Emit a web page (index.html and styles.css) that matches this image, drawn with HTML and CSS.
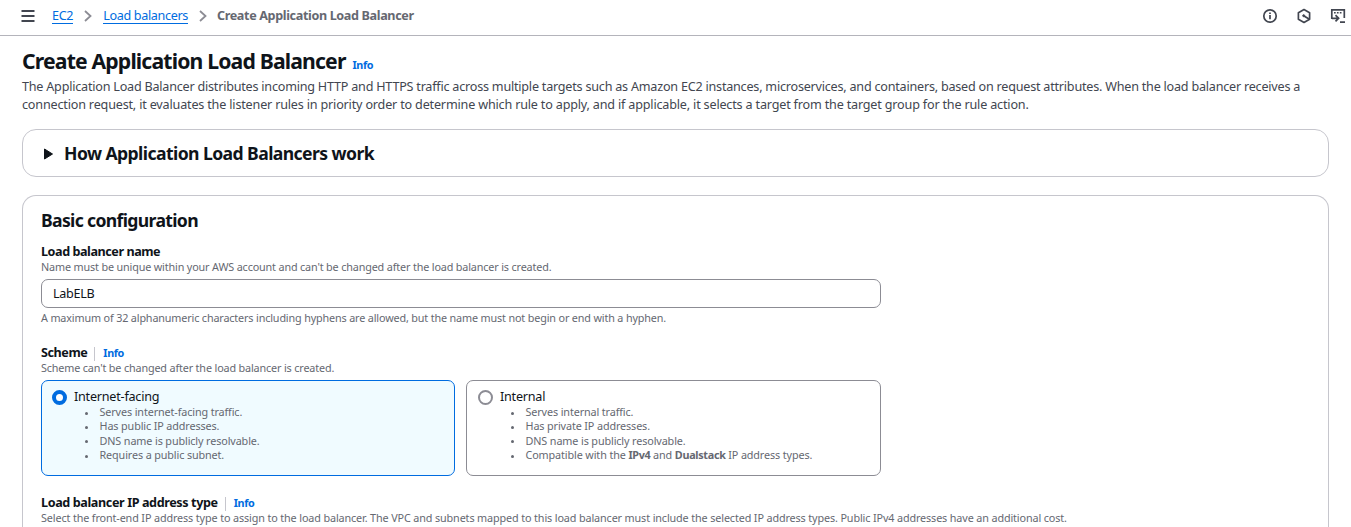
FILE: index.html
```html
<!DOCTYPE html>
<html lang="en">
<head>
<meta charset="utf-8">
<title>Create Application Load Balancer</title>
<link rel="stylesheet" href="styles.css">
</head>
<body>
<header class="topbar">
  <svg class="menu" width="14" height="12" viewBox="0 0 14 12"><path d="M.5 1h13M.5 6h13M.5 11h13" stroke="#424650" stroke-width="1.8"/></svg>
  <nav class="crumbs">
    <a class="crumb crumb-ec2" href="#">EC2</a>
    <svg class="chev" width="8" height="12" viewBox="0 0 8 12"><path d="M1 1l5.5 5L1 11" fill="none" stroke="#8c8c94" stroke-width="1.8"/></svg>
    <a class="crumb crumb-lb" href="#">Load balancers</a>
    <svg class="chev" width="8" height="12" viewBox="0 0 8 12"><path d="M1 1l5.5 5L1 11" fill="none" stroke="#8c8c94" stroke-width="1.8"/></svg>
    <span class="crumb-current">Create Application Load Balancer</span>
  </nav>
  <div class="tools">
    <svg width="16" height="16" viewBox="0 0 16 16" fill="none" stroke="#424650" stroke-width="1.7"><circle cx="8" cy="8" r="6.2"/><path d="M8 7v4.3M8 4.4v1.6"/></svg>
    <svg width="16" height="16" viewBox="0 0 16 16" fill="none" stroke="#424650" stroke-width="1.7"><path d="M8 1.6l5.6 3.1v6.6L8 14.4l-5.6-3.1V4.7z" stroke-linejoin="round"/><circle cx="7.7" cy="7.7" r="1" fill="#424650" stroke-width="1"/><path d="M8 8l5 3"/></svg>
    <svg width="16" height="16" viewBox="0 0 16 16" fill="none" stroke="#424650" stroke-width="1.7"><path d="M1.8 11V1.8h12.5V10M2 10.3h6.3M5.5 7.2l3.100 3.100-3.100 3.100M10 14.200h5"/><path d="M4 4.700h8" stroke-dasharray="1.700 1.200" stroke-width="1.500"/></svg>
  </div>
</header>
<main class="page">
  <div class="title-row"><h1>Create Application Load Balancer</h1><a class="info" href="#">Info</a></div>
  <p class="intro"><span class="intro-a">The Application Load Balancer distributes incoming HTTP and HTTPS traffic across multiple targets such as Amazon EC2 instances, microservices, and containers, based on request attributes. When the load balancer receives a</span><br><span class="intro-b">connection request, it evaluates the listener rules in priority order to determine which rule to apply, and if applicable, it selects a target from the target group for the rule action.</span></p>
  <section class="card how">
    <svg width="9" height="12" viewBox="0 0 9 12"><path d="M.5 1v10L8.5 6z" fill="#0f141a" stroke="#0f141a" stroke-linejoin="round"/></svg>
    <h2>How Application Load Balancers work</h2>
  </section>
  <section class="card config">
    <h2 class="config-title">Basic configuration</h2>
    <div class="field">
      <div class="label-row"><span class="label">Load balancer name</span></div>
      <div class="hint">Name must be unique within your AWS account and can't be changed after the load balancer is created.</div>
      <div class="input">LabELB</div>
      <div class="hint after">A maximum of 32 alphanumeric characters including hyphens are allowed, but the name must not begin or end with a hyphen.</div>
    </div>
    <div class="field scheme">
      <div class="label-row"><span class="label">Scheme</span><i class="sep"></i><a class="info" href="#">Info</a></div>
      <div class="hint">Scheme can't be changed after the load balancer is created.</div>
      <div class="tiles">
        <div class="tile selected">
          <span class="radio on"></span>
          <div><div class="tile-title">Internet-facing</div>
          <ul><li>Serves internet-facing traffic.</li><li>Has public IP addresses.</li><li>DNS name is publicly resolvable.</li><li>Requires a public subnet.</li></ul></div>
        </div>
        <div class="tile">
          <span class="radio"></span>
          <div><div class="tile-title">Internal</div>
          <ul><li>Serves internal traffic.</li><li>Has private IP addresses.</li><li>DNS name is publicly resolvable.</li><li>Compatible with the <b>IPv4</b> and <b>Dualstack</b> IP address types.</li></ul></div>
        </div>
      </div>
    </div>
    <div class="field iptype">
      <div class="label-row"><span class="label label-ip">Load balancer IP address type</span><i class="sep"></i><a class="info" href="#">Info</a></div>
      <div class="hint hint-wide">Select the front-end IP address type to assign to the load balancer. The VPC and subnets mapped to this load balancer must include the selected IP address types. Public IPv4 addresses have an additional cost.</div>
    </div>
  </section>
</main>
</body>
</html>
```

FILE: styles.css
```css
* { box-sizing: border-box; }
body { margin: 0; height: 527px; overflow: hidden; background: #fff; color: #0f141a; font: 12.6px/18px "Noto Sans", "Open Sans", sans-serif; white-space: nowrap; }
h1, h2, p, ul { margin: 0; padding: 0; }
a { color: #006ce0; text-decoration: none; }
svg { display: block; flex: none; }
.topbar { height: 36px; border-bottom: 1px solid #b4b4bb; display: flex; align-items: center; padding: 0 5px 4px 21px; }
.crumbs { display: flex; align-items: center; margin-left: 17px; letter-spacing: -.3px; }
.crumb { border-bottom: 1px solid #006ce0; line-height: 15px; height: 16px; }
.crumb-lb { letter-spacing: -.35px; }
.chev { margin: 0 11px; }
.crumb-current { color: #656871; font-weight: 700; letter-spacing: -.36px; margin-left: -1px; }
.tools { display: flex; gap: 18px; margin-left: auto; }
.page { padding: 12px 22px 0; }
.title-row { display: flex; align-items: baseline; gap: 7px; height: 30px; line-height: 26px; }
h1 { font-size: 21.2px; font-weight: 700; letter-spacing: -.84px; }
.info { font-size: 10.8px; font-weight: 700; letter-spacing: -.38px; }
.intro { color: #424650; letter-spacing: -.22px; }
.intro-b { letter-spacing: -.18px; }
.card { border: 1px solid #c6c6cd; border-radius: 14px; }
.how { margin-top: 15px; height: 48px; display: flex; align-items: center; padding-left: 21px; gap: 11px; }
h2 { font-size: 17.6px; line-height: 22px; font-weight: 700; letter-spacing: -.58px; }
.how svg { margin-top: 2px; }
.config { margin-top: 18px; height: 332px; border-bottom: 0; border-radius: 14px 14px 0 0; padding: 14px 18px 0; }
.label-row { display: flex; align-items: center; height: 18px; }
.label { font-weight: 700; letter-spacing: -.44px; }
.label-ip { letter-spacing: -.39px; }
.field { margin-top: 11px; }
.config-title { letter-spacing: -.66px; margin-top: -1px; margin-bottom: 12px; }
.hint { color: #656871; font-size: 10.8px; line-height: 14px; height: 14px; margin-top: -1px; letter-spacing: -.15px; }
.hint-wide { letter-spacing: -.125px; }
.input { width: 840px; height: 29px; margin-top: 5px; border: 1px solid #8c8c94; border-radius: 7px; padding: 0 11px; line-height: 27px; letter-spacing: -.3px; }
.after { margin-top: 3px; }
.scheme { margin-top: 19px; }
.sep { width: 1px; height: 14px; background: #c6c6cd; margin: 2px 8px 0 7px; }
.tiles { display: grid; grid-template-columns: 414px 415px; gap: 11px; margin-top: 5px; }
.tile { height: 96px; border: 1px solid #8c8c94; border-radius: 7px; padding: 7px 10px 7px 11px; display: flex; gap: 7px; }
.selected { border-color: #006ce0; background: #f0fbff; padding-left: 10px; }
.radio { width: 15px; height: 15px; border: 2px solid #8c8c94; border-radius: 50%; margin-top: 2px; flex: none; background: #fff; }
.on { border: 4.5px solid #006ce0; }
.tile-title { letter-spacing: -.22px; height: 17px; }
ul { list-style: none; color: #656871; font-size: 10.8px; line-height: 14.4px; letter-spacing: -.12px; }
li { display: block; }
li::before { content: ""; display: inline-block; width: 3px; height: 3px; border-radius: 50%; background: #656871; margin: 0 11.5px 0 11px; vertical-align: middle; }
li b { font-weight: 700; letter-spacing: -.3px; }
.iptype { margin-top: 18px; }
```
